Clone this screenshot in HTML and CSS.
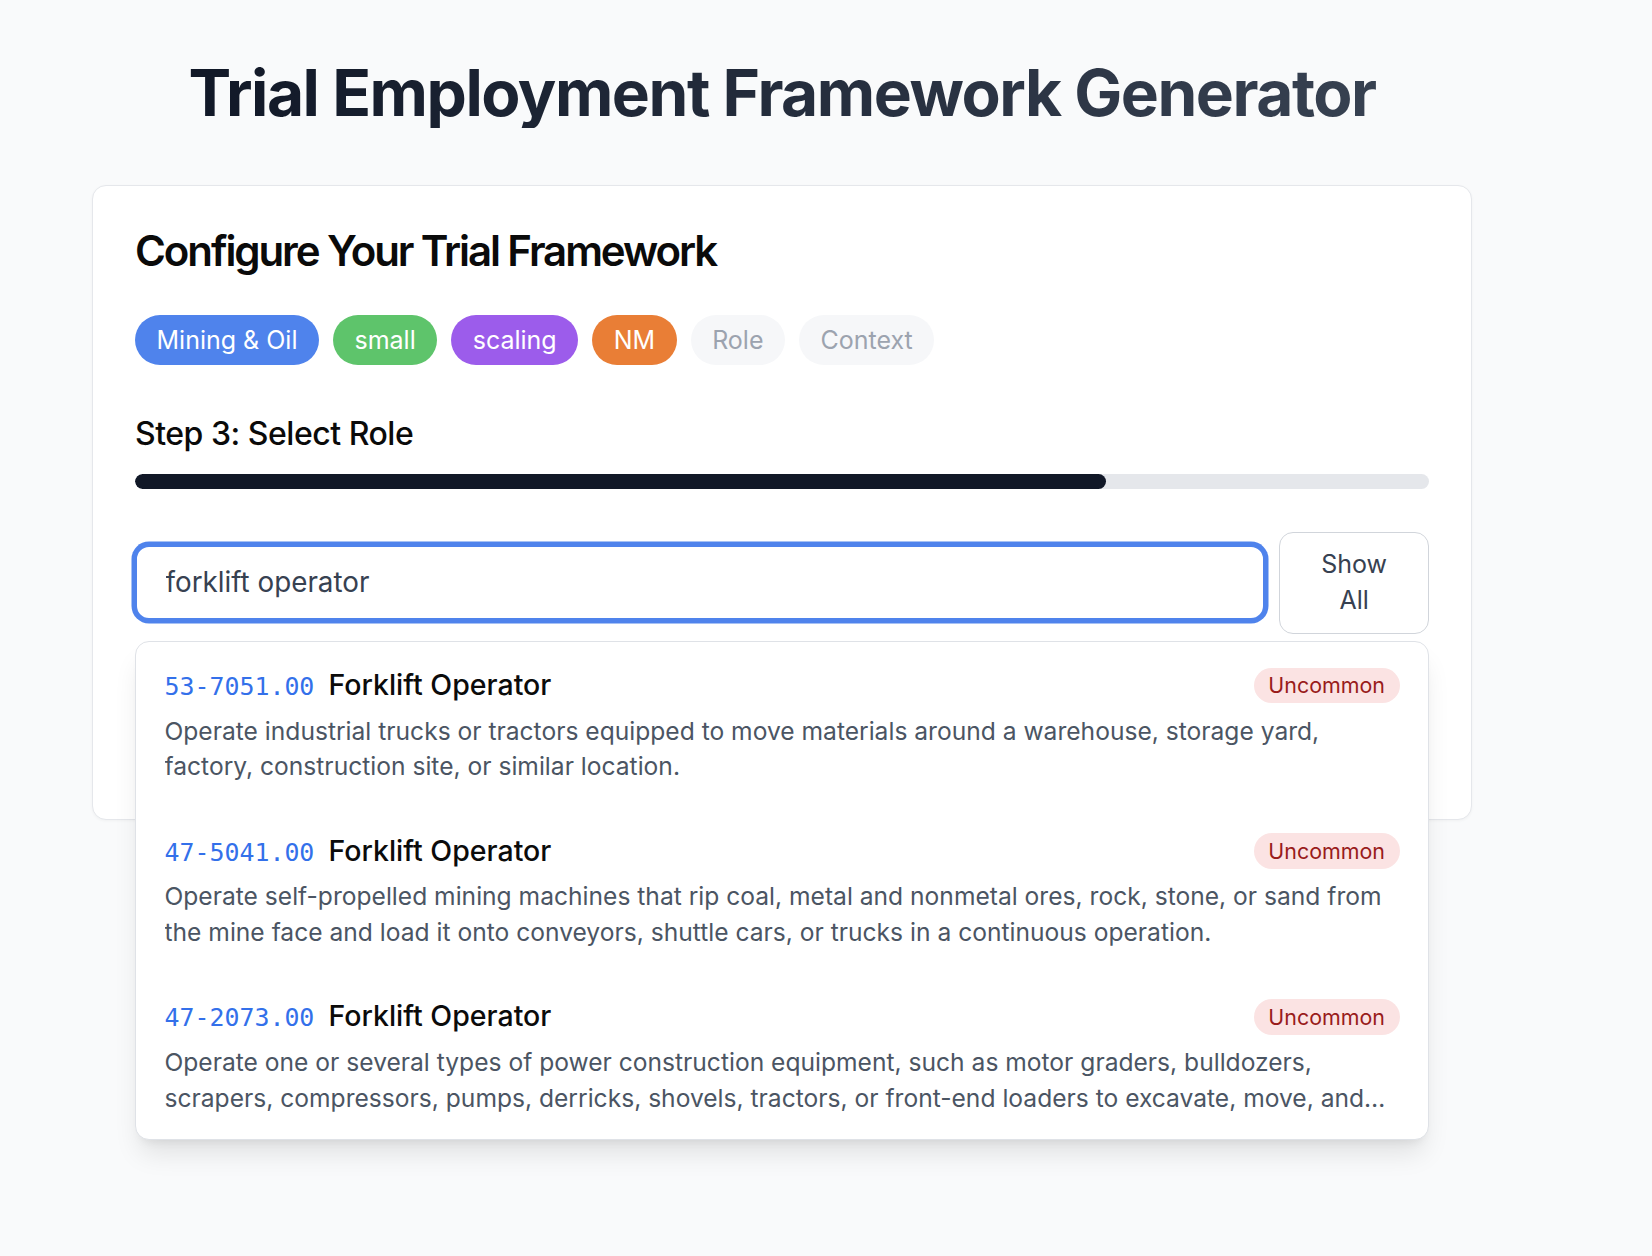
FILE: index.html
```html
<!DOCTYPE html>
<html lang="en">
<head>
<meta charset="utf-8">
<title>Trial Employment Framework Generator</title>
<link rel="stylesheet" href="styles.css">
</head>
<body>
<div class="page">
  <h1 class="title"><span class="title-text">Trial Employment Framework Generator</span></h1>

  <section class="card">
    <h2 class="card-heading">Configure Your Trial Framework</h2>

    <div class="pills">
      <span class="pill pill-blue">Mining &amp; Oil</span>
      <span class="pill pill-green">small</span>
      <span class="pill pill-purple">scaling</span>
      <span class="pill pill-orange">NM</span>
      <span class="pill pill-muted">Role</span>
      <span class="pill pill-muted">Context</span>
    </div>

    <h3 class="step">Step 3: Select Role</h3>
    <div class="progress"><div class="progress-fill" style="width: 75%"></div></div>

    <div class="search">
      <input class="search-input" type="text" value="forklift operator">
      <button class="show-all" type="button">Show All</button>

      <div class="dropdown">
        <div class="item">
          <div class="item-head">
            <div class="item-title"><span class="code">53-7051.00</span><span class="name">Forklift Operator</span></div>
            <span class="badge">Uncommon</span>
          </div>
          <p class="desc">Operate industrial trucks or tractors equipped to move materials around a warehouse, storage yard, factory, construction site, or similar location.</p>
        </div>
        <div class="item">
          <div class="item-head">
            <div class="item-title"><span class="code">47-5041.00</span><span class="name">Forklift Operator</span></div>
            <span class="badge">Uncommon</span>
          </div>
          <p class="desc">Operate self-propelled mining machines that rip coal, metal and nonmetal ores, rock, stone, or sand from the mine face and load it onto conveyors, shuttle cars, or trucks in a continuous operation.</p>
        </div>
        <div class="item">
          <div class="item-head">
            <div class="item-title"><span class="code">47-2073.00</span><span class="name">Forklift Operator</span></div>
            <span class="badge">Uncommon</span>
          </div>
          <p class="desc">Operate one or several types of power construction equipment, such as motor graders, bulldozers, scrapers, compressors, pumps, derricks, shovels, tractors, or front-end loaders to excavate, move, and grade earth, erect structures, or pour concrete or other hard surface pavement. May repair and maintain equipment in addition to other duties.</p>
        </div>
      </div>
    </div>

    <div class="card-footer"></div>
  </section>
</div>
</body>
</html>
```

FILE: styles.css
```css
* { box-sizing: border-box; }

html, body {
  margin: 0;
  padding: 0;
}

body {
  min-height: 100vh;
  background: #f9fafb;
  font-family: "Inter", "Noto Sans", sans-serif;
  color: #111827;
}

.page {
  width: 1380px;
  min-height: 1256px;
  margin-left: 92px;
  padding: 57px 0 57px;
}

.title {
  margin: 0 0 57px;
  text-align: center;
  font-size: 64px;
  line-height: 71px;
  font-weight: 700;
  letter-spacing: -0.023em;
}

.title-text {
  display: inline-block;
  background: linear-gradient(to right, #111827, #374151);
  -webkit-background-clip: text;
  background-clip: text;
  color: transparent;
}

.card {
  background: #ffffff;
  border: 1px solid #e5e7eb;
  border-radius: 14px;
  padding: 37px 42px 42px;
  box-shadow: 0 1px 3px rgba(0, 0, 0, 0.04);
}

.card-heading {
  margin: 0 0 36px;
  font-size: 42px;
  line-height: 56px;
  font-weight: 600;
  letter-spacing: -0.05em;
  color: #0a0a0a;
}

.pills {
  display: flex;
  gap: 14px;
  margin-bottom: 44px;
}

.pill {
  display: inline-block;
  padding: 7px 21.5px;
  font-size: 25px;
  line-height: 36px;
  border-radius: 9999px;
  color: #ffffff;
}

.pill-blue { background: #4f83ec; }
.pill-green { background: #5ec46b; }
.pill-purple { background: #9c5ceb; }
.pill-orange { background: #e97e36; }
.pill-muted { background: #f6f7f9; color: #9ca3af; }

.step {
  margin: 0 0 15px;
  font-size: 32px;
  line-height: 50px;
  font-weight: 500;
  color: #0a0a0a;
  letter-spacing: -0.015em;
}

.progress {
  height: 15px;
  border-radius: 9999px;
  background: #e5e7eb;
  margin-bottom: 43px;
  overflow: hidden;
}

.progress-fill {
  height: 100%;
  background: #111827;
  border-radius: 9999px;
}

.search {
  position: relative;
  display: flex;
  align-items: center;
  gap: 14px;
}

.search-input {
  flex: 1;
  min-width: 0;
  font-family: inherit;
  font-size: 27.8px;
  line-height: 42.7px;
  padding: 14px 28.5px;
  color: #374151;
  background: #ffffff;
  border: 2px solid #4f83ec;
  border-radius: 14px;
  box-shadow: 0 0 0 3.5px #4f83ec;
  outline: none;
}

.show-all {
  flex-shrink: 0;
  width: min-content;
  font-family: inherit;
  font-size: 25px;
  line-height: 35.6px;
  padding: 14.2px 41px;
  color: #374151;
  background: #ffffff;
  border: 1px solid #d1d5db;
  border-radius: 14px;
  text-align: center;
}

.dropdown {
  position: absolute;
  top: calc(100% + 7px);
  left: 0;
  right: 0;
  z-index: 10;
  background: #ffffff;
  border: 1px solid #dfe2e7;
  border-radius: 14px;
  box-shadow: 0 18px 27px -5px rgba(0, 0, 0, 0.1), 0 7px 11px -7px rgba(0, 0, 0, 0.1);
  overflow: hidden;
}

.item {
  padding: 22.5px 28.5px 22.3px;
}

.item-head {
  display: flex;
  align-items: center;
  justify-content: space-between;
}

.item-title {
  display: flex;
  align-items: baseline;
}

.code {
  font-family: "DejaVu Sans Mono", "Liberation Mono", monospace;
  font-size: 24.9px;
  color: #3370ea;
  margin-right: 14.2px;
}

.name {
  font-size: 28.5px;
  line-height: 42.7px;
  font-weight: 500;
  color: #0b0b0b;
}

.badge {
  padding: 3.6px 14.6px;
  font-size: 21.4px;
  line-height: 28.5px;
  border-radius: 9999px;
  background: #fbe3e3;
  color: #991b1b;
}

.desc {
  margin: 7px 0 0;
  font-size: 24.6px;
  line-height: 35.6px;
  color: #4b5563;
  display: -webkit-box;
  -webkit-line-clamp: 2;
  -webkit-box-orient: vertical;
  overflow: hidden;
}

.card-footer {
  margin-top: 43px;
  height: 100px;
}
```
